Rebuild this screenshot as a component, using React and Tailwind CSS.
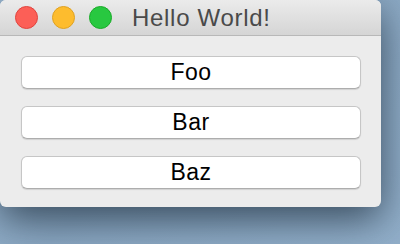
import React from 'react';

const Button = ({ label }) => (
  <button className="h-[33px] w-full rounded-[6px] border border-[#c6c6c6] border-b-[#adadad] bg-white pb-[1px] text-[23px] leading-none tracking-[0.5px] text-black shadow-[0_1px_1px_rgba(0,0,0,0.12)]">
    {label}
  </button>
);

const App = () => {
  return (
    <div
      className="h-[244px] w-[400px] overflow-hidden bg-[linear-gradient(135deg,#9cb8d2_0%,#8aa7c2_45%,#92afca_100%)]"
      style={{ fontFamily: '"Liberation Sans", Arial, sans-serif' }}
    >
      <div className="flex h-[207px] w-[381px] flex-col overflow-hidden rounded-[6px] bg-[#ececec] shadow-[0_12px_38px_rgba(20,35,50,0.7)]">
        {/* Title bar */}
        <div className="flex h-[36px] shrink-0 items-center border-b border-[#b8b8b8] bg-[linear-gradient(#ebebeb,#d5d5d5)] pl-[15px]">
          <div className="flex items-center gap-[14px]">
            <span className="h-[23px] w-[23px] rounded-full border border-[#e0443e] bg-[#fc5f57]" />
            <span className="h-[23px] w-[23px] rounded-full border border-[#dea123] bg-[#fdbc2e]" />
            <span className="h-[23px] w-[23px] rounded-full border border-[#1aab29] bg-[#28c840]" />
          </div>
          <span className="ml-[20px] text-[24px] leading-none tracking-[0.7px] text-[#4a4a4a]">Hello World!</span>
        </div>

        {/* Body */}
        <div className="flex flex-col gap-[17px] pl-[21px] pr-[20px] pt-[20px]">
          <Button label="Foo" />
          <Button label="Bar" />
          <Button label="Baz" />
        </div>
      </div>
    </div>
  );
};

export default App;
